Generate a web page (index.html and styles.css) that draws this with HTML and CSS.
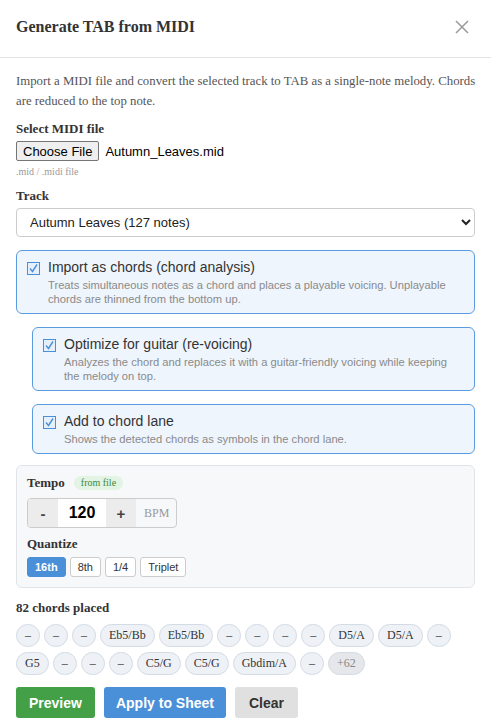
FILE: index.html
```html
<!DOCTYPE html>
<html>
    <head>
        <meta charset="UTF-8">
        <title>Generate TAB from MIDI</title>
        <link rel="stylesheet" href="styles.css">
    </head>
    <body>
        <div class="modal">
            <div class="modal-header">
                <h2 class="modal-title">Generate TAB from MIDI</h2>
                <button class="close-btn" aria-label="Close">
                    <svg width="14" height="14" viewBox="0 0 14 14"><path d="M1 1 L13 13 M13 1 L1 13" stroke="#9a9a9a" stroke-width="1.5" fill="none"/></svg>
                </button>
            </div>
            <div class="modal-body">
                <p class="desc">Import a MIDI file and convert the selected track to TAB as a single-note melody. Chords are reduced to the top note.</p>

                <div class="field-label">Select MIDI file</div>
                <div class="file-row">
                    <button class="file-btn">Choose File</button>
                    <span class="file-name">Autumn_Leaves.mid</span>
                </div>
                <div class="hint">.mid / .midi file</div>

                <div class="field-label track-label">Track</div>
                <select class="track-select">
                    <option>Autumn Leaves (127 notes)</option>
                </select>

                <div class="option">
                    <span class="check"><svg width="11" height="11" viewBox="0 0 11 11"><path d="M2 5.5 L4.5 8.5 L9 1.5" stroke="#4a90d9" stroke-width="1.4" fill="none"/></svg></span>
                    <div>
                        <div class="option-title">Import as chords (chord analysis)</div>
                        <div class="option-desc">Treats simultaneous notes as a chord and places a playable voicing. Unplayable chords are thinned from the bottom up.</div>
                    </div>
                </div>
                <div class="option sub">
                    <span class="check"><svg width="11" height="11" viewBox="0 0 11 11"><path d="M2 5.5 L4.5 8.5 L9 1.5" stroke="#4a90d9" stroke-width="1.4" fill="none"/></svg></span>
                    <div>
                        <div class="option-title">Optimize for guitar (re-voicing)</div>
                        <div class="option-desc">Analyzes the chord and replaces it with a guitar-friendly voicing while keeping the melody on top.</div>
                    </div>
                </div>
                <div class="option sub">
                    <span class="check"><svg width="11" height="11" viewBox="0 0 11 11"><path d="M2 5.5 L4.5 8.5 L9 1.5" stroke="#4a90d9" stroke-width="1.4" fill="none"/></svg></span>
                    <div>
                        <div class="option-title">Add to chord lane</div>
                        <div class="option-desc">Shows the detected chords as symbols in the chord lane.</div>
                    </div>
                </div>

                <div class="settings">
                    <div class="tempo-row">
                        <span class="settings-label">Tempo</span>
                        <span class="badge">from file</span>
                    </div>
                    <div class="stepper">
                        <button class="step-btn">-</button>
                        <span class="step-value">120</span>
                        <button class="step-btn">+</button>
                        <span class="bpm">BPM</span>
                    </div>
                    <div class="settings-label quant-label">Quantize</div>
                    <div class="quant-row">
                        <button class="quant-btn active">16th</button>
                        <button class="quant-btn">8th</button>
                        <button class="quant-btn">1/4</button>
                        <button class="quant-btn">Triplet</button>
                    </div>
                </div>

                <div class="field-label chords-label">82 chords placed</div>
                <div class="chips">
                    <span class="chip">–</span>
                    <span class="chip">–</span>
                    <span class="chip">–</span>
                    <span class="chip">Eb5/Bb</span>
                    <span class="chip">Eb5/Bb</span>
                    <span class="chip">–</span>
                    <span class="chip">–</span>
                    <span class="chip">–</span>
                    <span class="chip">–</span>
                    <span class="chip">D5/A</span>
                    <span class="chip">D5/A</span>
                    <span class="chip">–</span>
                    <span class="chip">G5</span>
                    <span class="chip">–</span>
                    <span class="chip">–</span>
                    <span class="chip">–</span>
                    <span class="chip">C5/G</span>
                    <span class="chip">C5/G</span>
                    <span class="chip">Gbdim/A</span>
                    <span class="chip">–</span>
                    <span class="chip more">+62</span>
                </div>

                <div class="actions">
                    <button class="btn btn-green">Preview</button>
                    <button class="btn btn-blue">Apply to Sheet</button>
                    <button class="btn btn-gray">Clear</button>
                </div>
            </div>
        </div>
    </body>
</html>
```

FILE: styles.css
```css
body {
    margin: 0;
    background-color: #fff;
    font-family: "Liberation Serif", "Times New Roman", serif;
    color: #333;
}
button {
    font-family: "Liberation Sans", Arial, sans-serif;
    cursor: pointer;
}
.modal {
    background-color: #fff;
}
.modal-header {
    display: flex;
    justify-content: space-between;
    align-items: center;
    padding: 15px 16px 18px 16px;
    border-bottom: 1px solid #e3e3e3;
}
.modal-title {
    margin: 0;
    font-size: 16px;
    line-height: 24px;
    font-weight: bold;
    color: #333;
}
.close-btn {
    display: flex;
    align-items: center;
    justify-content: center;
    width: 24px;
    height: 24px;
    padding: 0;
    margin-right: 1px;
    border: none;
    background: none;
}
.modal-body {
    padding: 14px 16px 16px 16px;
}
.desc {
    margin: 0 -2px 10px 0;
    font-size: 12.8px;
    line-height: 19.5px;
    color: #555;
}
.field-label {
    font-size: 13px;
    line-height: 15px;
    font-weight: bold;
    color: #333;
    margin-bottom: 5px;
}
.file-row {
    display: flex;
    align-items: center;
    gap: 6px;
}
.file-btn {
    height: 20px;
    padding: 0 6px;
    font-size: 13px;
    color: #000;
    background-color: #efefef;
    border: 1px solid #767676;
    border-radius: 2px;
}
.file-name {
    font-family: "Liberation Sans", Arial, sans-serif;
    font-size: 13px;
    color: #000;
}
.hint {
    margin-top: 4px;
    font-size: 10px;
    line-height: 14px;
    color: #999;
}
.track-label {
    margin-top: 9px;
    margin-bottom: 5px;
}
.track-select {
    display: block;
    width: 100%;
    height: 29px;
    padding: 0 6px 0 9px;
    font-family: "Liberation Sans", Arial, sans-serif;
    font-size: 13px;
    color: #222;
    background-color: #fff;
    border: 1px solid #ccc;
    border-radius: 4px;
}
.option {
    display: flex;
    align-items: flex-start;
    gap: 8px;
    margin-top: 13px;
    padding: 7px 10px;
    background-color: #eef5fd;
    border: 1px solid #5b9bdf;
    border-radius: 6px;
}
.option.sub {
    margin-left: 16px;
}
.check {
    flex: none;
    display: flex;
    align-items: center;
    justify-content: center;
    width: 11px;
    height: 11px;
    margin-top: 4px;
    background-color: #e6f0fc;
    border: 1px solid #4a90d9;
}
.option-title {
    font-family: "Liberation Sans", Arial, sans-serif;
    font-size: 14px;
    line-height: 18px;
    color: #333;
}
.option-desc {
    margin-top: 2px;
    font-family: "Liberation Sans", Arial, sans-serif;
    font-size: 11.2px;
    line-height: 14px;
    color: #8a8a8a;
}
.settings {
    margin-top: 11px;
    padding: 10px;
    background-color: #f7f8fa;
    border: 1px solid #e0e3e8;
    border-radius: 6px;
}
.tempo-row {
    display: flex;
    align-items: center;
    gap: 9px;
}
.settings-label {
    font-size: 13px;
    line-height: 14px;
    font-weight: bold;
    color: #333;
}
.badge {
    padding: 1px 7px;
    font-size: 10px;
    line-height: 12px;
    color: #3b8a3e;
    background-color: #e3f3e4;
    border-radius: 8px;
}
.stepper {
    display: inline-flex;
    align-items: stretch;
    height: 30px;
    margin-top: 8px;
    border: 1px solid #ccc;
    border-radius: 4px;
    overflow: hidden;
    box-sizing: border-box;
}
.step-btn {
    width: 30px;
    padding: 0;
    font-size: 15px;
    font-weight: bold;
    color: #444;
    background-color: #ececec;
    border: none;
}
.step-value {
    display: flex;
    align-items: center;
    justify-content: center;
    width: 48px;
    font-family: "Liberation Sans", Arial, sans-serif;
    font-size: 16px;
    font-weight: bold;
    color: #000;
    background-color: #fff;
}
.bpm {
    display: flex;
    align-items: center;
    padding: 0 7px 0 8px;
    font-size: 12px;
    color: #999;
}
.quant-label {
    margin-top: 9px;
}
.quant-row {
    display: flex;
    gap: 4px;
    margin-top: 6px;
}
.quant-btn {
    height: 20px;
    padding: 0 7px;
    font-size: 11px;
    color: #333;
    background-color: #fff;
    border: 1px solid #ccc;
    border-radius: 3px;
}
.quant-btn.active {
    font-weight: bold;
    color: #fff;
    background-color: #4a90d9;
    border-color: #4a90d9;
}
.chords-label {
    margin-top: 12px;
    margin-bottom: 9px;
}
.chips {
    display: flex;
    flex-wrap: wrap;
    gap: 5px 4px;
}
.chip {
    height: 23px;
    box-sizing: border-box;
    padding: 0 8px;
    font-size: 12px;
    line-height: 21px;
    color: #333;
    background-color: #eef2f7;
    border: 1px solid #d3dbe5;
    border-radius: 12px;
}
.chip.more {
    color: #888;
    background-color: #e5e7ea;
}
.actions {
    display: flex;
    gap: 9px;
    margin-top: 12px;
}
.btn {
    height: 31px;
    padding: 0 13px;
    font-size: 14px;
    font-weight: bold;
    color: #fff;
    border: none;
    border-radius: 3px;
}
.btn-green {
    background-color: #43a047;
}
.btn-blue {
    padding: 0 12px;
    background-color: #4a90d9;
}
.btn-gray {
    color: #333;
    background-color: #e0e0e0;
    padding: 0 14px;
}
```
